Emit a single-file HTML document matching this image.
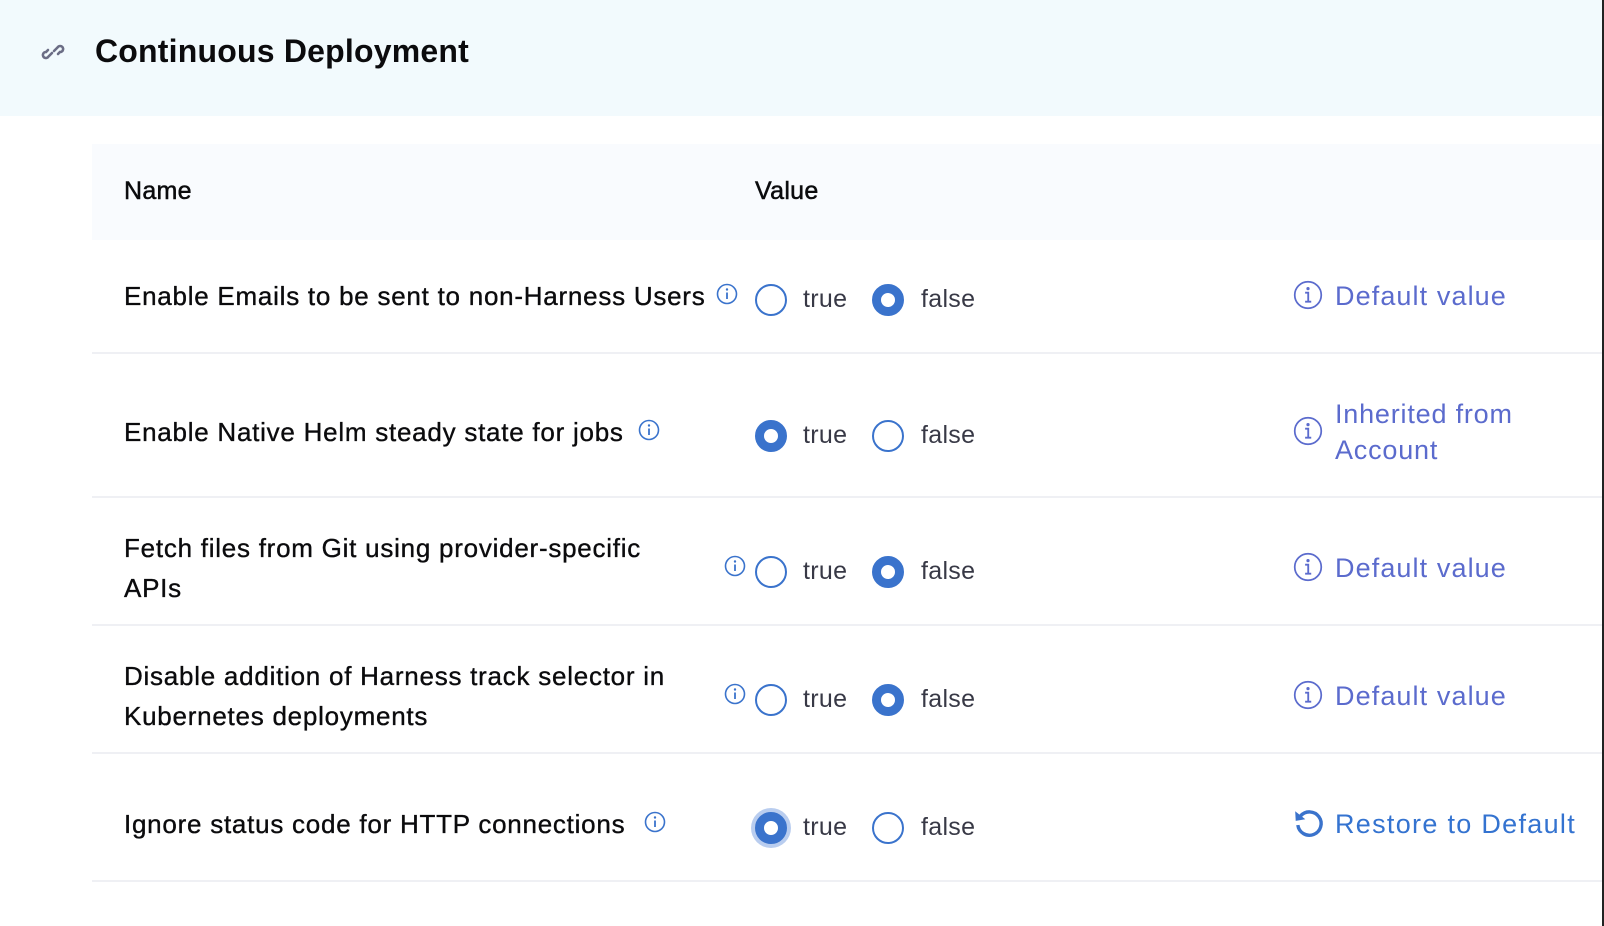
<!DOCTYPE html>
<html><head><meta charset="utf-8"><style>
*{margin:0;padding:0;box-sizing:border-box}
body{width:1604px;height:926px;background:#fff;font-family:"Liberation Sans",sans-serif;position:relative;overflow:hidden;color:#0b0b0d}
.hdr{position:absolute;left:0;top:0;width:1602px;height:116px;background:#f2fafd}
.edge{position:absolute;right:0;top:0;width:2px;height:926px;background:#222}
.title{position:absolute;left:95px;top:33px;font-size:32px;font-weight:bold;letter-spacing:0.2px}
.th{position:absolute;left:92px;top:144px;width:1510px;height:96px;background:#f9fbfe}
.th span{position:absolute;top:33px;font-size:25px;-webkit-text-stroke:0.5px #0b0b0d;letter-spacing:0.3px}
.a{position:absolute;font-size:26px;line-height:40px;color:#0b0b0d;letter-spacing:0.75px;-webkit-text-stroke:0.35px #0b0b0d}
.sep{position:absolute;left:92px;width:1510px;height:2px;background:#eff0f4}
.r{position:absolute;width:32px;height:32px;border-radius:50%;border:2px solid #3a73cc;background:#fff}
.r.on{border:9px solid #3a73cc}
.rt{position:absolute;font-size:25px;color:#383946;letter-spacing:0.3px}
.inf{position:absolute;width:22px;height:22px}
.dv{position:absolute;font-size:27px;color:#5b6bcd;line-height:36px;letter-spacing:1.1px}
</style></head><body>
<div class="hdr"></div>
<svg style="position:absolute;left:41px;top:40px" width="24" height="24" viewBox="0 0 24 24"><path d="M11 13 L7.5 16.5 A3 3 0 1 1 5 12 L7 10 M13 11 L16.5 7.5 A3 3 0 1 1 19 12 L17 14" fill="none" stroke="#6b6d85" stroke-width="2.6" stroke-linecap="round"/></svg>
<div class="title">Continuous Deployment</div>
<div class="th"><span style="left:32px">Name</span><span style="left:663px">Value</span></div>

<div class="a" style="left:124px;top:276px">Enable Emails to be sent to non-Harness Users</div>
<div class="a" style="left:124px;top:412px">Enable Native Helm steady state for jobs</div>
<div class="a" style="left:124px;top:528px">Fetch files from Git using provider-specific<br>APIs</div>
<div class="a" style="left:124px;top:656px">Disable addition of Harness track selector in<br>Kubernetes deployments</div>
<div class="a" style="left:124px;top:804px">Ignore status code for HTTP connections</div>

<svg class="inf" style="left:716px;top:283px" viewBox="0 0 22 22"><circle cx="11" cy="11" r="9.5" fill="none" stroke="#3a73cc" stroke-width="1.6"/><circle cx="11" cy="6.5" r="1.2" fill="#3a73cc"/><path d="M11 9.5V16" stroke="#3a73cc" stroke-width="1.8"/></svg>
<svg class="inf" style="left:638px;top:419px" viewBox="0 0 22 22"><circle cx="11" cy="11" r="9.5" fill="none" stroke="#3a73cc" stroke-width="1.6"/><circle cx="11" cy="6.5" r="1.2" fill="#3a73cc"/><path d="M11 9.5V16" stroke="#3a73cc" stroke-width="1.8"/></svg>
<svg class="inf" style="left:724px;top:555px" viewBox="0 0 22 22"><circle cx="11" cy="11" r="9.5" fill="none" stroke="#3a73cc" stroke-width="1.6"/><circle cx="11" cy="6.5" r="1.2" fill="#3a73cc"/><path d="M11 9.5V16" stroke="#3a73cc" stroke-width="1.8"/></svg>
<svg class="inf" style="left:724px;top:683px" viewBox="0 0 22 22"><circle cx="11" cy="11" r="9.5" fill="none" stroke="#3a73cc" stroke-width="1.6"/><circle cx="11" cy="6.5" r="1.2" fill="#3a73cc"/><path d="M11 9.5V16" stroke="#3a73cc" stroke-width="1.8"/></svg>
<svg class="inf" style="left:644px;top:811px" viewBox="0 0 22 22"><circle cx="11" cy="11" r="9.5" fill="none" stroke="#3a73cc" stroke-width="1.6"/><circle cx="11" cy="6.5" r="1.2" fill="#3a73cc"/><path d="M11 9.5V16" stroke="#3a73cc" stroke-width="1.8"/></svg>

<div class="r" style="left:755px;top:284px"></div><div class="rt" style="left:803px;top:285px">true</div>
<div class="r on" style="left:872px;top:284px"></div><div class="rt" style="left:921px;top:285px">false</div>
<div class="r on" style="left:755px;top:420px"></div><div class="rt" style="left:803px;top:421px">true</div>
<div class="r" style="left:872px;top:420px"></div><div class="rt" style="left:921px;top:421px">false</div>
<div class="r" style="left:755px;top:556px"></div><div class="rt" style="left:803px;top:557px">true</div>
<div class="r on" style="left:872px;top:556px"></div><div class="rt" style="left:921px;top:557px">false</div>
<div class="r" style="left:755px;top:684px"></div><div class="rt" style="left:803px;top:685px">true</div>
<div class="r on" style="left:872px;top:684px"></div><div class="rt" style="left:921px;top:685px">false</div>
<div class="r on" style="left:755px;top:812px;box-shadow:0 0 0 4px #b9cdef"></div><div class="rt" style="left:803px;top:813px">true</div>
<div class="r" style="left:872px;top:812px"></div><div class="rt" style="left:921px;top:813px">false</div>

<svg style="position:absolute;left:1293px;top:280px" width="30" height="30" viewBox="0 0 26 26"><circle cx="13" cy="13" r="11.5" fill="none" stroke="#5b6bcd" stroke-width="1.5"/><circle cx="13" cy="7.5" r="1.4" fill="#5b6bcd"/><path d="M10.5 11H13.2V18.5M10.5 18.8H15.8" fill="none" stroke="#5b6bcd" stroke-width="1.6"/></svg>
<div class="dv" style="left:1335px;top:278px">Default value</div>
<svg style="position:absolute;left:1293px;top:416px" width="30" height="30" viewBox="0 0 26 26"><circle cx="13" cy="13" r="11.5" fill="none" stroke="#5b6bcd" stroke-width="1.5"/><circle cx="13" cy="7.5" r="1.4" fill="#5b6bcd"/><path d="M10.5 11H13.2V18.5M10.5 18.8H15.8" fill="none" stroke="#5b6bcd" stroke-width="1.6"/></svg>
<div class="dv" style="left:1335px;top:396px;letter-spacing:0.8px">Inherited from<br>Account</div>
<svg style="position:absolute;left:1293px;top:552px" width="30" height="30" viewBox="0 0 26 26"><circle cx="13" cy="13" r="11.5" fill="none" stroke="#5b6bcd" stroke-width="1.5"/><circle cx="13" cy="7.5" r="1.4" fill="#5b6bcd"/><path d="M10.5 11H13.2V18.5M10.5 18.8H15.8" fill="none" stroke="#5b6bcd" stroke-width="1.6"/></svg>
<div class="dv" style="left:1335px;top:550px">Default value</div>
<svg style="position:absolute;left:1293px;top:680px" width="30" height="30" viewBox="0 0 26 26"><circle cx="13" cy="13" r="11.5" fill="none" stroke="#5b6bcd" stroke-width="1.5"/><circle cx="13" cy="7.5" r="1.4" fill="#5b6bcd"/><path d="M10.5 11H13.2V18.5M10.5 18.8H15.8" fill="none" stroke="#5b6bcd" stroke-width="1.6"/></svg>
<div class="dv" style="left:1335px;top:678px">Default value</div>
<svg style="position:absolute;left:1292px;top:807px" width="34" height="34" viewBox="0 0 32 32"><path d="M8 8.5 A11 11 0 1 1 5.5 17" fill="none" stroke="#3a73cc" stroke-width="3.2"/><path d="M3 4 L3.5 13 L12.5 11.5 Z" fill="#3a73cc"/></svg>
<div class="dv" style="left:1335px;top:806px;color:#3473d0;letter-spacing:1.3px">Restore to Default</div>

<div class="sep" style="top:352px"></div>
<div class="sep" style="top:496px"></div>
<div class="sep" style="top:624px"></div>
<div class="sep" style="top:752px"></div>
<div class="sep" style="top:880px"></div>
<div class="edge"></div>
</body></html>
